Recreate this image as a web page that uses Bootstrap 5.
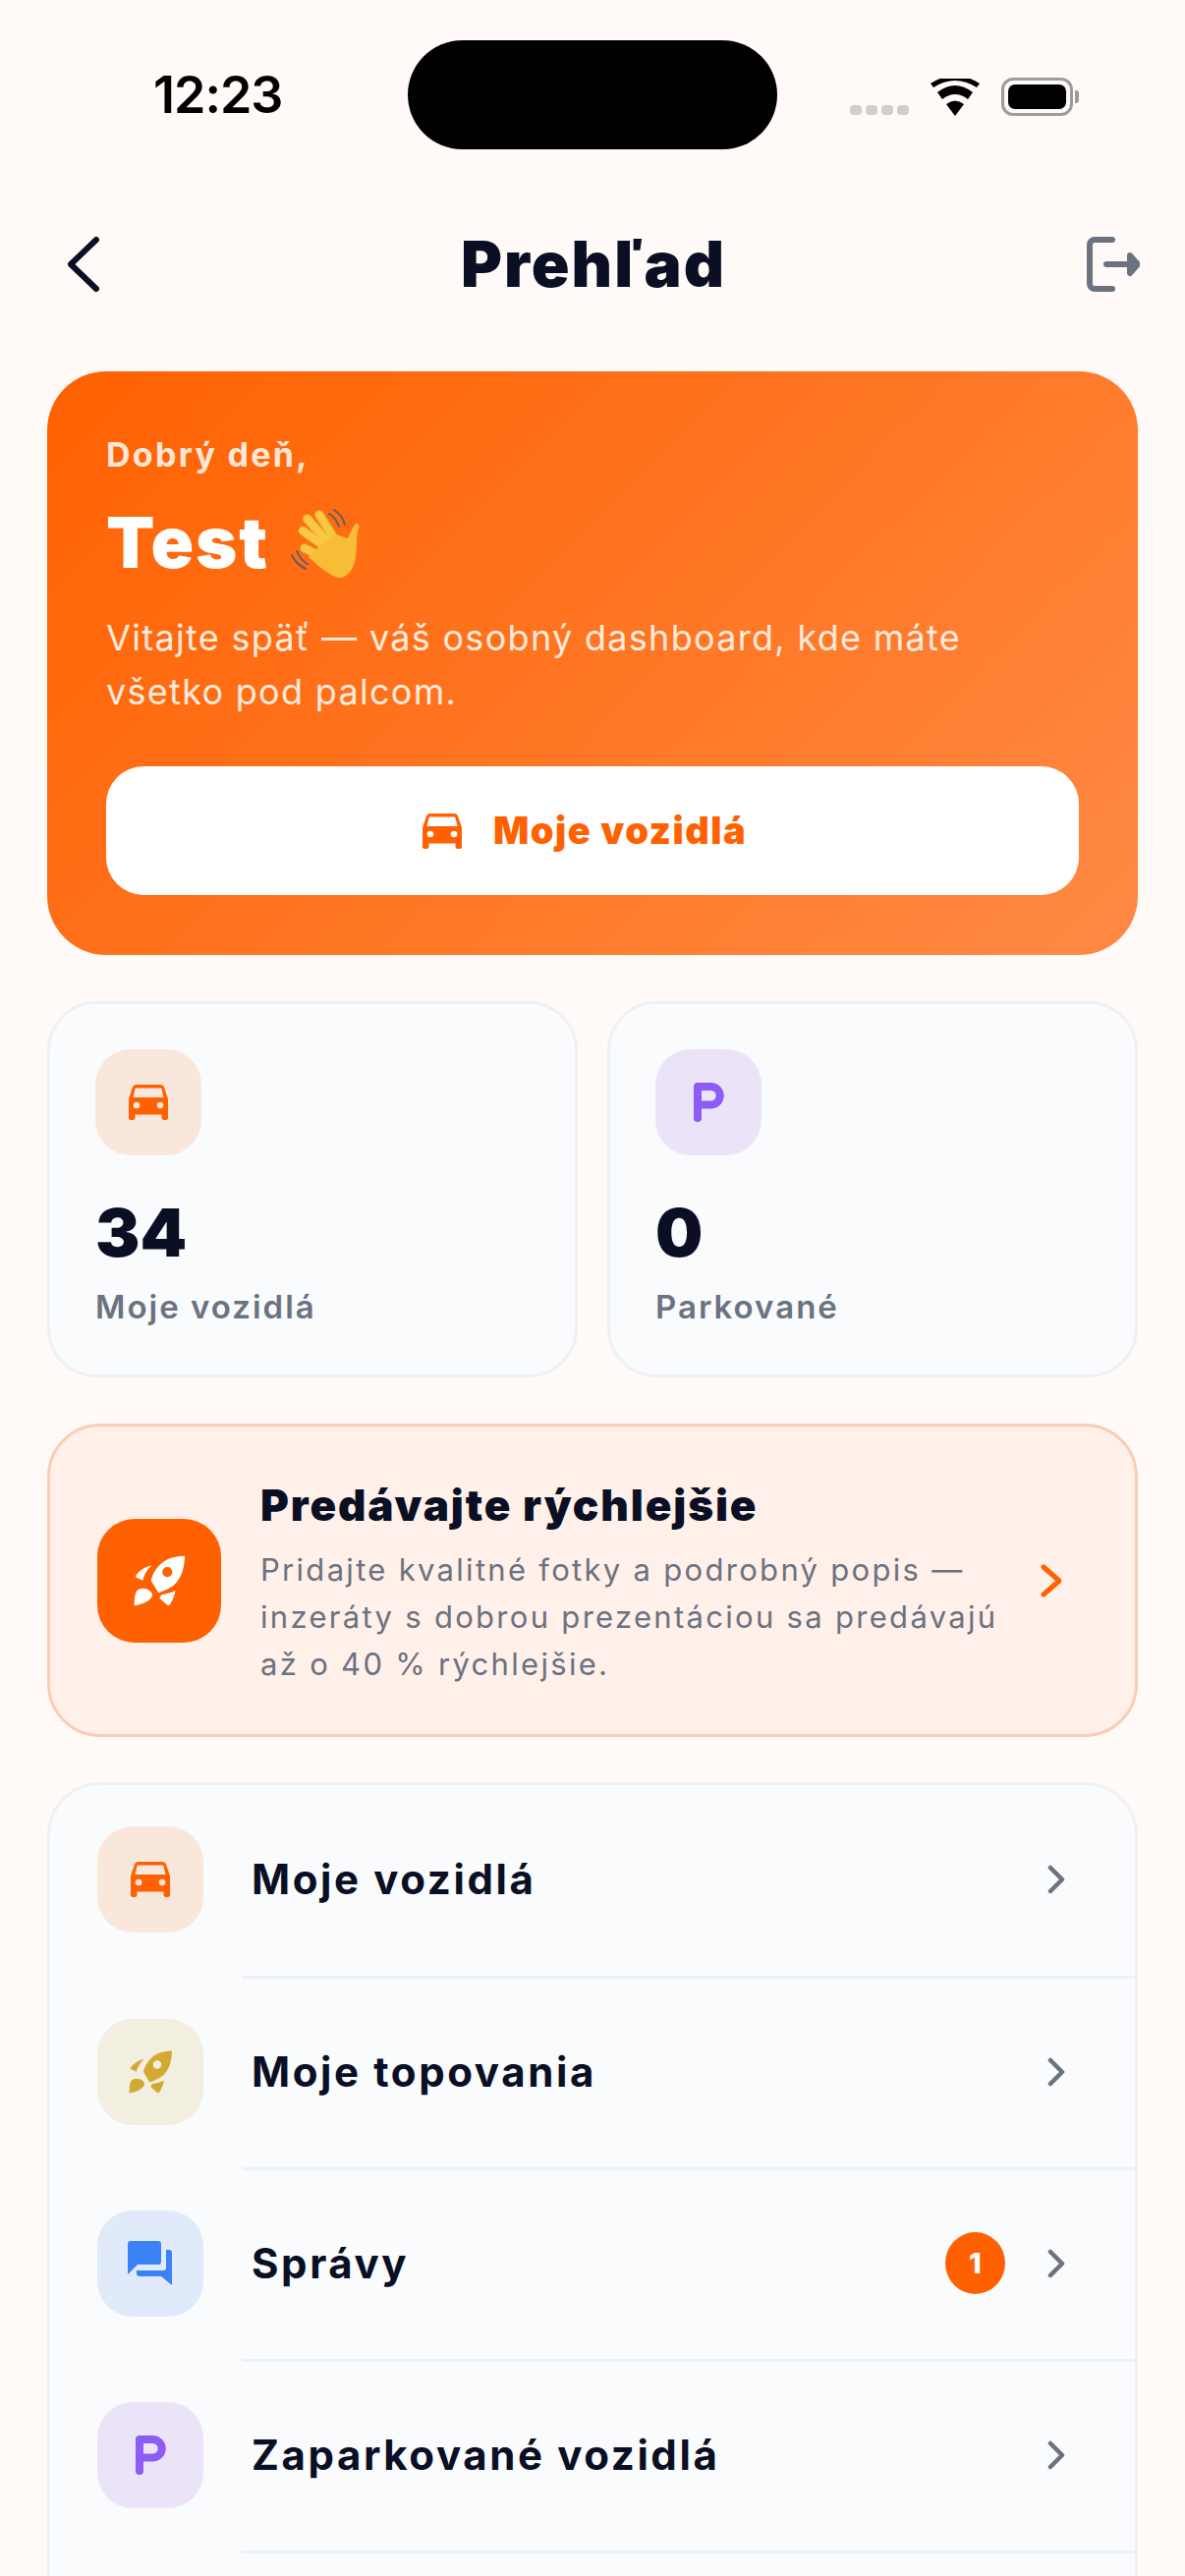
<!DOCTYPE html>
<html lang="sk">
<head>
  <meta charset="UTF-8" />
  <meta name="viewport" content="width=device-width, initial-scale=1" />
  <title>Prehľad</title>
  <link href="https://cdn.jsdelivr.net/npm/bootstrap@5.3.3/dist/css/bootstrap.min.css" rel="stylesheet" />
  <style>
    html, body { height: 2622px; overflow: hidden; }
    body {
      background-color: #fffaf8;
      color: #0a0f24;
      font-family: Inter, "Noto Sans", sans-serif;
    }
    /* Status bar */
    .status-row { height: 193px; padding: 41px 62px 0 156px; }
    .clock { width: 259px; height: 111px; font: 600 52px/111px Inter, sans-serif; color: #000; letter-spacing: -1px; }
    .island { width: 376px; height: 111px; border-radius: 56px; background: #000; }
    .status-icons { margin-left: 74px; height: 111px; gap: 22px; padding-top: 4px; }
    .signal-dots { gap: 4px; margin-top: 26px; }
    .signal-dots span { width: 12px; height: 10px; border-radius: 4px; background: #cfcfcf; }
    .battery-body { width: 73px; height: 39px; border: 3px solid #9c9c9c; border-radius: 12px; padding: 4px; }
    .battery-body span { display: block; height: 100%; background: #000; border-radius: 7px; }
    .battery-nub { width: 4px; height: 13px; background: #9c9c9c; border-radius: 0 3px 3px 0; margin-left: 2px; }
    /* Header */
    .top-bar { height: 152px; padding: 0 46px 0 68px; margin-bottom: 33px; }
    .page-name { font-size: 64px; font-weight: 900; line-height: 1; letter-spacing: 2px; margin: 0; }
    /* Hero */
    .sheet { padding: 0 48px; }
    .hero-box {
      height: 594px;
      padding: 63px 60px 0;
      border-radius: 60px;
      color: #fff;
      background: linear-gradient(135deg, #ff6100 0%, #ff8a45 100%);
    }
    .hello { font-size: 34px; font-weight: 700; line-height: 44px; letter-spacing: 2.3px; color: #ffe6d6; }
    .hero-name { font-size: 72px; font-weight: 900; line-height: 90px; margin-top: 22px; letter-spacing: 1.8px; gap: 22px; }
    .hero-name svg { margin-top: 4px; }
    .hero-text { font-size: 36px; line-height: 55px; letter-spacing: 1.3px; color: #ffeadd; margin: 25px 0 0; }
    .hero-btn {
      height: 131px;
      margin-top: 48px;
      padding: 0 16px 0 0;
      border: 0;
      border-radius: 38px;
      background: #fff;
      color: #ff6100;
      font-size: 38px;
      font-weight: 900;
      letter-spacing: 1.5px;
      gap: 32px;
    }
    .hero-btn:hover { background: #fff; color: #ff6100; }
    /* Stats */
    .stat-row { gap: 30px; margin-top: 47px; }
    .stat-box {
      height: 383px;
      padding: 46px 46px 0 46px;
      background: #f9fbfd;
      border: 3px solid #eef1f4;
      border-radius: 50px;
    }
    .tile { width: 108px; height: 108px; border-radius: 36px; flex-shrink: 0; }
    .tile-orange { background: #f9e7dc; color: #ff6100; }
    .tile-violet { background: #ebe4f9; color: #8b5cf6; }
    .tile-gold { background: #f3efe0; color: #d4a933; }
    .tile-blue { background: #e0eafa; color: #3b82f6; }
    .stat-num { font-size: 68px; font-weight: 900; line-height: 80px; margin-top: 38px; }
    .stat-label { font-size: 33px; font-weight: 600; line-height: 44px; letter-spacing: 2px; color: #6b7280; margin-top: 14px; }
    /* Promo */
    .promo-box {
      height: 319px;
      margin-top: 47px;
      padding: 0 73px 0 48px;
      background: #fff0ea;
      border: 3px solid #fbcdb4;
      border-radius: 54px;
      gap: 32px;
    }
    .promo-icon { width: 126px; height: 126px; border-radius: 38px; background: #ff6100; color: #fff; flex-shrink: 0; margin-right: 8px; }
    .promo-copy { padding-top: 7px; }
    .promo-title { font-size: 44px; font-weight: 900; line-height: 50px; letter-spacing: 1.9px; }
    .promo-text { font-size: 31px; line-height: 48px; letter-spacing: 2.3px; color: #6b7280; margin: 17px 0 0; }
    /* Menu */
    .menu-box {
      margin-top: 46px;
      background: #f9fbfd;
      border: 3px solid #eef1f4;
      border-radius: 54px;
      --bs-list-group-bg: transparent;
      --bs-list-group-border-width: 0;
    }
    .menu-row {
      height: 195px;
      padding: 0 71px 6px 48px;
      gap: 49px;
      color: #0a0f24;
      position: relative;
    }
    .menu-row:first-child { height: 197px; }
    .menu-row::after {
      content: "";
      position: absolute;
      left: 195px;
      right: 0;
      bottom: 0;
      height: 3px;
      background: #eef1f4;
    }
    .menu-name { font-size: 42px; font-weight: 700; letter-spacing: 2.6px; }
    .count-pill {
      width: 61px;
      height: 63px;
      padding: 0;
      border-radius: 50%;
      background: #ff6100;
      font: 800 29px/63px Inter, sans-serif;
      margin-right: -6px;
    }
  </style>
</head>
<body>
  <div class="status-row d-flex">
    <div class="clock">12:23</div>
    <div class="island"></div>
    <div class="status-icons d-flex align-items-center">
      <div class="signal-dots d-flex"><span></span><span></span><span></span><span></span></div>
      <svg width="50" height="38" viewBox="0 0 50 38"><path d="M25 38 16 26q9-7 18 0zM12 21 7 14q18-14 36 0l-5 7Q25 11 12 21zM3 9 0 5q25-16 50 0l-3 4Q25-5 3 9z" fill="#000"/></svg>
      <div class="d-flex align-items-center">
        <div class="battery-body"><span></span></div>
        <div class="battery-nub"></div>
      </div>
    </div>
  </div>

  <div class="top-bar d-flex align-items-center justify-content-between">
    <svg width="34" height="58" viewBox="0 0 34 58" fill="none" stroke="#0a0f24" stroke-width="6" stroke-linecap="round" stroke-linejoin="round"><path d="M30 4 4 29l26 25"/></svg>
    <h1 class="page-name">Prehľad</h1>
    <svg width="54" height="56" viewBox="0 0 54 56" fill="none" stroke="#6b7280" stroke-width="6" stroke-linecap="round" stroke-linejoin="round"><path d="M26 3H8a5 5 0 0 0-5 5v40a5 5 0 0 0 5 5h18"/><path d="M20 28h24" /><path d="M44 19l8 9-8 9z" fill="#6b7280"/></svg>
  </div>

  <div class="sheet">
    <section class="hero-box">
      <div class="hello">Dobrý deň,</div>
      <div class="hero-name d-flex align-items-center">Test
        <svg width="72" height="72" viewBox="0 0 72 72">
          <g fill="none" stroke="#5d6068" stroke-width="2" stroke-linecap="round"><path d="M44 1q8 5 11 15M39 5q7 4 10 13M1 47q4 9 14 14M6 43q3 8 11 13"/></g>
          <g fill="none" stroke="#e59f22" stroke-width="10" stroke-linecap="round"><path d="M29 6 42 27M16.700 10 36 32M12.300 22.300 34 38M14 40 34 50"/></g>
          <g fill="none" stroke="#f9c742" stroke-width="8" stroke-linecap="round"><path d="M29 6 42 27M16.700 10 36 32M12.300 22.300 34 38M14 40 34 50"/></g>
          <path fill="#f8bd36" d="M32 37 46 26 58 30C60 25 62 20 66 15c3-1 4 2 3 5-3 8-1 18-3 28-1 12-8 22-16 22-8 0-20-10-32-21l12-12z"/>
        </svg>
      </div>
      <p class="hero-text">Vitajte späť — váš osobný dashboard, kde máte všetko pod palcom.</p>
      <button type="button" class="btn hero-btn w-100 d-flex align-items-center justify-content-center">
        <svg width="40" height="36" viewBox="0 0 40 36" fill="currentColor"><use href="#car"/></svg>
        Moje vozidlá
      </button>
    </section>

    <div class="stat-row d-flex">
      <div class="card stat-box flex-fill w-50">
        <div class="tile tile-orange d-flex align-items-center justify-content-center">
          <svg width="40" height="36" viewBox="0 0 40 36" fill="currentColor"><use href="#car"/></svg>
        </div>
        <div class="stat-num">34</div>
        <div class="stat-label">Moje vozidlá</div>
      </div>
      <div class="card stat-box flex-fill w-50">
        <div class="tile tile-violet d-flex align-items-center justify-content-center">
          <svg width="31" height="40" viewBox="0 0 31 40" fill="none" stroke="currentColor" stroke-width="8" stroke-linecap="round" stroke-linejoin="round"><use href="#parking"/></svg>
        </div>
        <div class="stat-num">0</div>
        <div class="stat-label">Parkované</div>
      </div>
    </div>

    <div class="promo-box d-flex align-items-center">
      <div class="promo-icon d-flex align-items-center justify-content-center">
        <svg width="52" height="52" viewBox="0 0 44 44" fill="currentColor"><use href="#rocket"/></svg>
      </div>
      <div class="promo-copy flex-grow-1">
        <div class="promo-title">Predávajte rýchlejšie</div>
        <p class="promo-text">Pridajte kvalitné fotky a podrobný popis — inzeráty s dobrou prezentáciou sa predávajú až o 40 % rýchlejšie.</p>
      </div>
      <svg class="flex-shrink-0" width="24" height="36" viewBox="0 0 24 36" fill="none" stroke="#ff6100" stroke-width="5" stroke-linecap="round" stroke-linejoin="round"><path d="M4 4l16 14L4 32"/></svg>
    </div>

    <div class="list-group menu-box">
      <a href="#" class="list-group-item menu-row d-flex align-items-center text-decoration-none">
        <span class="tile tile-orange d-flex align-items-center justify-content-center">
          <svg width="40" height="36" viewBox="0 0 40 36" fill="currentColor"><use href="#car"/></svg>
        </span>
        <span class="menu-name flex-grow-1">Moje vozidlá</span>
        <svg width="18" height="30" viewBox="0 0 18 30" fill="none" stroke="#6b7280" stroke-width="4.5" stroke-linecap="round" stroke-linejoin="round"><use href="#chev"/></svg>
      </a>
      <a href="#" class="list-group-item menu-row d-flex align-items-center text-decoration-none">
        <span class="tile tile-gold d-flex align-items-center justify-content-center">
          <svg width="44" height="44" viewBox="0 0 44 44" fill="currentColor"><use href="#rocket"/></svg>
        </span>
        <span class="menu-name flex-grow-1">Moje topovania</span>
        <svg width="18" height="30" viewBox="0 0 18 30" fill="none" stroke="#6b7280" stroke-width="4.5" stroke-linecap="round" stroke-linejoin="round"><use href="#chev"/></svg>
      </a>
      <a href="#" class="list-group-item menu-row d-flex align-items-center text-decoration-none">
        <span class="tile tile-blue d-flex align-items-center justify-content-center">
          <svg width="46" height="45" viewBox="0 0 46 45" fill="currentColor"><path d="M3 0h28a3 3 0 0 1 3 3v18a3 3 0 0 1-3 3H10L0 34V3a3 3 0 0 1 3-3z"/><path d="M39 9h3a3 3 0 0 1 3 3v33L34 36H12a3 3 0 0 1-3-3v-3h27a3 3 0 0 0 3-3z"/></svg>
        </span>
        <span class="menu-name flex-grow-1">Správy</span>
        <span class="badge count-pill">1</span>
        <svg width="18" height="30" viewBox="0 0 18 30" fill="none" stroke="#6b7280" stroke-width="4.5" stroke-linecap="round" stroke-linejoin="round"><use href="#chev"/></svg>
      </a>
      <a href="#" class="list-group-item menu-row d-flex align-items-center text-decoration-none">
        <span class="tile tile-violet d-flex align-items-center justify-content-center">
          <svg width="31" height="40" viewBox="0 0 31 40" fill="none" stroke="currentColor" stroke-width="8" stroke-linecap="round" stroke-linejoin="round"><use href="#parking"/></svg>
        </span>
        <span class="menu-name flex-grow-1">Zaparkované vozidlá</span>
        <svg width="18" height="30" viewBox="0 0 18 30" fill="none" stroke="#6b7280" stroke-width="4.5" stroke-linecap="round" stroke-linejoin="round"><use href="#chev"/></svg>
      </a>
      <div class="list-group-item menu-row"></div>
    </div>
  </div>

  <!-- shared icons -->
  <svg width="0" height="0" class="d-block">
    <defs>
      <path id="car" fill-rule="evenodd" d="M8 0h24c2 0 3.500 1 4 2.500l4 12V34c0 1-1 2-2 2h-2c-1.500 0-2.500-1-2.500-2v-3.500h-27V34c0 1-1 2-2.500 2H2c-1 0-2-1-2-2V14.500L4 2.500C4.500 1 6 0 8 0zM7.500 3.500c-.500 0-.800.300-1 .800L4.500 13h31L33.500 4.300c-.200-.500-.500-.800-1-.800zM8 17.700a3.300 3.300 0 1 0 0 6.600 3.300 3.300 0 0 0 0-6.600zm24 0a3.300 3.300 0 1 0 0 6.600 3.300 3.300 0 0 0 0-6.600z"/>
      <path id="parking" d="M4 36V4h13.500a9.250 9.250 0 0 1 0 18.500H4"/>
      <path id="chev" d="M3 3l12 12L3 27"/>
      <g id="rocket">
        <path fill-rule="evenodd" d="M44 .6C36 .6 28 3 24 7 19 11 16 17 15 22l6.400 10.400C28 30 35 27 38 22 42 17 44 8 44 .6zM29 10.200a4.300 4.300 0 1 0 0 8.600 4.300 4.300 0 0 0 0-8.600z"/>
        <path d="M15.600 8.700C10 10 5 13 2 17.400c-.5 1.100 0 1.600 1 2.100l4.800 2.200C9 17 12 12 15.600 8.700z"/>
        <path d="M35.900 30.400C33 32 28 33.500 24 34l-1.700 3 6.700 6c1 .5 2 0 2.500-1 2.500-4 4-8 4.400-11.600z"/>
        <path d="M.6 43.400C.6 38 1 33 3 30.500c2-2 6-2.500 9-1 3 1.500 4.500 3.500 4 5.500-1 3-4 5-8 6.500-3 1-5 1.900-7.400 1.900z"/>
      </g>
    </defs>
  </svg>
  <script src="https://cdn.jsdelivr.net/npm/bootstrap@5.3.3/dist/js/bootstrap.bundle.min.js"></script>
</body>
</html>
